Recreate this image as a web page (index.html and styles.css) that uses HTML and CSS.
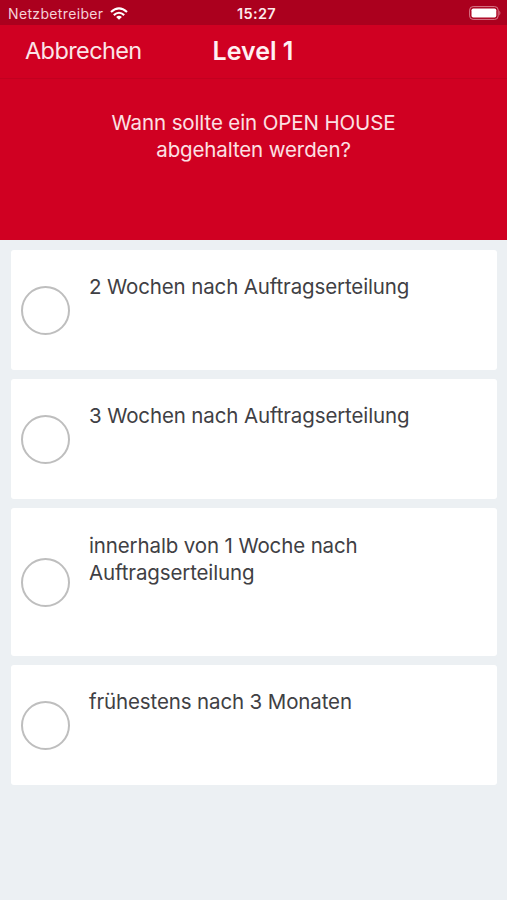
FILE: index.html
```html
<!DOCTYPE html>
<html lang="de">
<head>
<meta charset="utf-8">
<title>Level 1</title>
<link rel="stylesheet" href="styles.css">
</head>
<body>
<header class="status">
<div class="carrier"><span class="carrier-name">Netzbetreiber</span>
<svg class="wifi" width="18" height="13" viewBox="0 0 18 13" fill="none" stroke="#fff" stroke-width="2.1"><path d="M1 5.1Q9-2.3 17 5.1M3.8 8.1Q9 3.4 14.2 8.1"/><path d="M6.1 10Q9 7.5 11.9 10L9 12.8Z" fill="#fff" stroke="none"/></svg></div>
<time class="time">15:27</time>
<svg class="battery" width="32" height="14" viewBox="0 0 32 14"><rect x=".6" y=".6" width="28.6" height="12.8" rx="3.5" fill="none" stroke="#d97a8c"/><rect x="2.5" y="2.5" width="24.8" height="9" rx="1.8" fill="#fff"/><path d="M30.4 4.5q2 2.5 0 5z" fill="#d97a8c"/></svg>
</header>
<nav class="nav"><span class="cancel">Abbrechen</span><h1 class="title">Level 1</h1></nav>
<section class="question"><p class="question-text">Wann sollte ein OPEN HOUSE<br>abgehalten werden?</p></section>
<main class="answers">
<div class="answer"><span class="radio"></span><p class="label">2 Wochen nach Auftragserteilung</p></div>
<div class="answer"><span class="radio"></span><p class="label">3 Wochen nach Auftragserteilung</p></div>
<div class="answer tall"><span class="radio"></span><p class="label">innerhalb von 1 Woche nach<br>Auftragserteilung</p></div>
<div class="answer"><span class="radio"></span><p class="label">frühestens nach 3 Monaten</p></div>
</main>
</body>
</html>
```
FILE: styles.css
```css
* { box-sizing: border-box; }
body { margin: 0; height: 900px; overflow: hidden; background: #ecf0f3; color: #3f4044; font-family: Inter, sans-serif; }
p, h1 { margin: 0; }
.status { display: grid; grid-template-columns: 1fr auto 1fr; align-items: center; height: 25px; padding: 1px 6px 0 8px; background: #ab001e; color: #fff; }
.carrier { display: flex; align-items: center; gap: 7px; }
.carrier-name { font-size: 14px; letter-spacing: .35px; color: #f4d2d8; }
.time { position: relative; left: 2px; font-size: 14.5px; font-weight: 600; letter-spacing: .3px; color: #fdeaed; }
.battery { justify-self: end; }
.nav { display: grid; grid-template-columns: 1fr auto 1fr; align-items: center; height: 54px; padding: 0 26px 2px 25px; background: #d00022; border-bottom: 1px solid #c20020; color: #fff; }
.cancel { font-size: 23.5px; letter-spacing: -.6px; color: #fbe5e8; }
.title { font-size: 25px; font-weight: 600; color: #fff0f2; }
.question { height: 161px; padding-top: 30px; background: #d00022; color: #fce0e4; text-align: center; }
.question-text { font-size: 20.5px; line-height: 27px; letter-spacing: -.12px; }
.answers { display: flex; flex-direction: column; gap: 9px; padding: 10px 10px 0 11px; }
.answer { display: flex; align-items: center; gap: 20px; height: 120px; padding-left: 10px; background: #fff; border-radius: 3px; }
.tall { height: 148px; }
.radio { flex: none; width: 49px; height: 49px; margin-right: -1px; border: 2px solid #bebebe; border-radius: 50%; }
.label { align-self: flex-start; padding-top: 23px; font-size: 20.5px; line-height: 27px; letter-spacing: -.13px; white-space: nowrap; }
.tall .label { padding-top: 24px; }
```
